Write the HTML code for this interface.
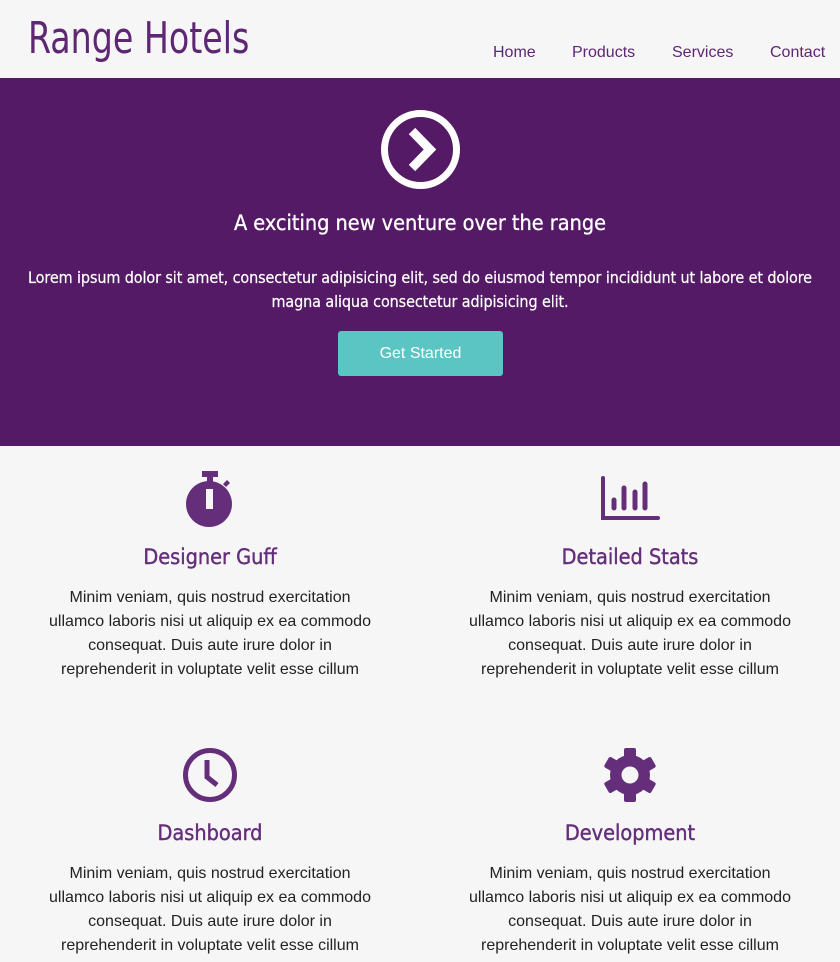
<!DOCTYPE html>
<html><head><meta charset="utf-8"><style>
*{margin:0;padding:0;box-sizing:border-box}
body{width:840px;height:962px;background:#f6f6f6;font-family:"Liberation Sans",sans-serif;overflow:hidden;position:relative}
.logo{position:absolute;left:28px;top:13px;font-family:"DejaVu Sans Condensed",sans-serif;font-size:44px;color:#5e2673;white-space:nowrap;transform:scaleX(0.84);transform-origin:left}
nav a{position:absolute;top:44px;font-size:16px;color:#5e2673;text-decoration:none}
.hero{position:absolute;left:0;top:78px;width:840px;height:368px;background:#541a66;color:#fff;text-align:center}
.hero h1{position:absolute;top:133px;width:100%;font-family:"DejaVu Sans Condensed","DejaVu Sans",sans-serif;font-weight:normal;font-size:21.5px;-webkit-text-stroke:0.3px #fff}
.hero p{position:absolute;top:188px;left:10px;right:10px;font-family:"DejaVu Sans Condensed","DejaVu Sans",sans-serif;font-size:16px;line-height:24px;letter-spacing:-0.1px;-webkit-text-stroke:0.2px #fff}
.btn{position:absolute;left:338px;top:253px;width:165px;height:45px;background:#5bc5c4;border-radius:3px;font-size:16px;line-height:45px}
.f{position:absolute;width:420px;text-align:center}
.f h2{font-family:"DejaVu Sans Condensed","DejaVu Sans",sans-serif;font-weight:normal;font-size:21.5px;color:#652e7b;position:absolute;width:100%;top:75px;-webkit-text-stroke:0.4px #652e7b}
.f p{position:absolute;top:116px;left:40px;right:40px;font-size:16px;line-height:24px;color:#222}
.f svg{position:absolute;left:50%;transform:translateX(-50%);top:0}
</style></head><body>
<div class="logo">Range Hotels</div>
<nav><a style="left:493px">Home</a><a style="left:572px">Products</a><a style="left:672px">Services</a><a style="left:770px">Contact</a></nav>
<div class="hero">
<svg style="position:absolute;left:380px;top:31px" width="81" height="81" viewBox="0 0 81 81"><circle cx="40.5" cy="40.5" r="36" fill="none" stroke="#fff" stroke-width="7"/><path d="M32 22 L50 40.5 L32 59" fill="none" stroke="#fff" stroke-width="9"/></svg>
<h1>A exciting new venture over the range</h1>
<p>Lorem ipsum dolor sit amet, consectetur adipisicing elit, sed do eiusmod tempor incididunt ut labore et dolore magna aliqua consectetur adipisicing elit.</p>
<div class="btn">Get Started</div>
</div>
<div class="f" style="left:0;top:470px"><svg width="50" height="58" viewBox="0 0 50 58"><rect x="17" y="1" width="16" height="6" fill="#652e7b"/><rect x="22" y="6" width="6" height="6" fill="#652e7b"/><path d="M38 14l4-4 3 3-4 4z" fill="#652e7b"/><circle cx="24" cy="34" r="23" fill="#652e7b"/><rect x="21" y="19" width="7" height="20" fill="#f6f6f6"/></svg><h2>Designer Guff</h2><p>Minim veniam, quis nostrud exercitation ullamco laboris nisi ut aliquip ex ea commodo consequat. Duis aute irure dolor in reprehenderit in voluptate velit esse cillum</p></div>
<div class="f" style="left:420px;top:470px"><svg width="60" height="58" viewBox="0 0 60 58"><path d="M3 8V48H58" fill="none" stroke="#652e7b" stroke-width="4" stroke-linecap="round"/><g stroke="#652e7b" stroke-width="5" stroke-linecap="round"><path d="M14 30V38M24 18V38M35 22V38M45 14V38"/></g></svg><h2>Detailed Stats</h2><p>Minim veniam, quis nostrud exercitation ullamco laboris nisi ut aliquip ex ea commodo consequat. Duis aute irure dolor in reprehenderit in voluptate velit esse cillum</p></div>
<div class="f" style="left:0;top:746px"><svg width="58" height="58" viewBox="0 0 58 58"><circle cx="29" cy="29" r="24.5" fill="none" stroke="#652e7b" stroke-width="5"/><path d="M26 14V31L36 39" fill="none" stroke="#652e7b" stroke-width="5"/></svg><h2>Dashboard</h2><p>Minim veniam, quis nostrud exercitation ullamco laboris nisi ut aliquip ex ea commodo consequat. Duis aute irure dolor in reprehenderit in voluptate velit esse cillum</p></div>
<div class="f" style="left:420px;top:746px"><svg width="58" height="58" viewBox="0 0 58 58"><g fill="#652e7b" transform="translate(29 29)"><circle r="20"/><rect x="-6" y="-27" width="12" height="54" rx="2"/><rect x="-6" y="-27" width="12" height="54" rx="2" transform="rotate(60)"/><rect x="-6" y="-27" width="12" height="54" rx="2" transform="rotate(120)"/></g><circle cx="29" cy="29" r="8.5" fill="#f6f6f6"/></svg><h2>Development</h2><p>Minim veniam, quis nostrud exercitation ullamco laboris nisi ut aliquip ex ea commodo consequat. Duis aute irure dolor in reprehenderit in voluptate velit esse cillum</p></div>
</body></html>
